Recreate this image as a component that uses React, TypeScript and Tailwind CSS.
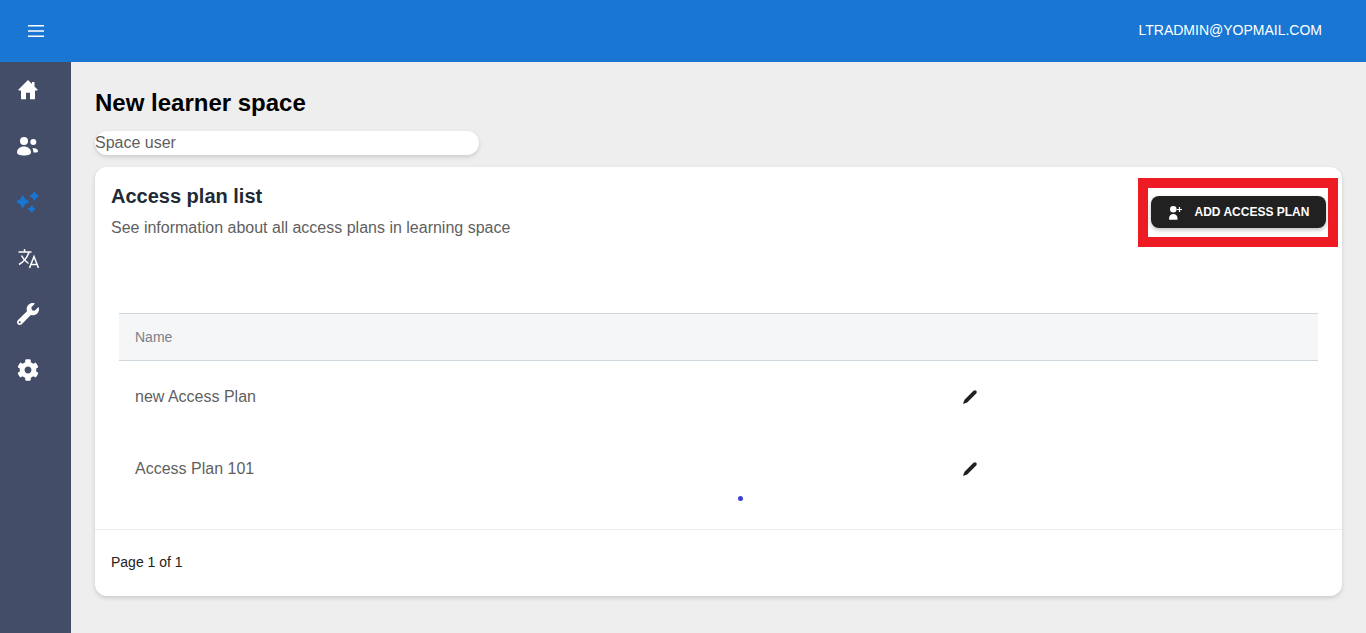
import React from 'react'
import { FaCog, FaWrench } from 'react-icons/fa'

function MenuIcon() {
  return (
    <svg viewBox="0 0 16 12" className="w-4 h-3" stroke="#ffffff" strokeWidth="1.4">
      <path d="M0 .8h16M0 6h16M0 11.200h16" />
    </svg>
  )
}

function HomeIcon() {
  return (
    <svg viewBox="0 0 24 24" className="w-6 h-6" fill="#ffffff">
      <path d="M12 2L2.500 11.500q-.5.9.5.9H5v8q0 .9.9.9H10v-6.500h4v6.500h4.100q.9 0 .9-.9v-8h2q1 0 .5-.9l-3-3V4h-2.500v2z" />
    </svg>
  )
}

function UsersIcon() {
  return (
    <svg viewBox="0 0 24 24" className="w-6 h-6" fill="#ffffff">
      <circle cx="8" cy="7" r="4" />
      <circle cx="17.300" cy="8" r="3" />
      <path d="M1 18.500C1 15 4 12.500 8 12.500s7 2.500 7 6c0 2-3 3-7 3s-7-1-7-3z" />
      <path d="M16.500 14c3 0 5.500 1 5.500 3 0 1-1 1.500-3 1.500h-1.500c-.2-1.800-.5-3-1-4.500z" />
    </svg>
  )
}

function Sparkles() {
  return (
    <svg viewBox="0 0 24 24" className="w-6 h-6" fill="#1976d2" stroke="#1976d2" strokeWidth="1" strokeLinejoin="round">
      <path d="M6.700 5.700Q8.200 10.200 12.700 11.700 8.200 13.200 6.700 17.700 5.200 13.200.7 11.700 5.200 10.200 6.700 5.700z" />
      <path d="M18.300 1.800Q19.300 5 22.500 6 19.300 7 18.300 10.200 17.300 7 14.100 6 17.300 5 18.300 1.800z" />
      <path d="M15.700 15.600Q16.600 18.100 19.100 19 16.600 19.900 15.700 22.400 14.800 19.900 12.300 19 14.800 18.100 15.700 15.600z" />
    </svg>
  )
}

function TranslateIcon() {
  return (
    <svg viewBox="0 0 24 24" className="w-6 h-6" fill="none" stroke="#ffffff" strokeWidth="1.500">
      <path d="M2.500 6h13M8.500 3v3M13 6c-1.500 5-5 9.500-10 12.500M5.500 9.500c1.500 3.300 4 6 7 8" />
      <path d="M13.500 22l4.500-11.500L22.500 22M15 18.500h6" />
    </svg>
  )
}

function Pencil() {
  return (
    <svg viewBox="0 0 24 24" className="w-6 h-6" fill="#212121">
      <path d="M5 19l1.500-4.200 9-9q1.500-1.200 2.800 0 1.100 1.200-.1 2.600l-9 9.100z" />
    </svg>
  )
}

function UserPlus() {
  return (
    <svg viewBox="0 0 16 16" className="w-4 h-4" fill="#ffffff">
      <circle cx="6.300" cy="5.300" r="3.300" />
      <path d="M2 15c0-3.200 1.800-5 4.300-5s4.300 1.800 4.300 5c0 .6-.5.8-1 .8H3c-.5 0-1-.2-1-.8z" />
      <path d="M12.500 3v5M10 5.500h5" stroke="#ffffff" strokeWidth="1.200" />
    </svg>
  )
}

function App() {
  const rows = ['new Access Plan', 'Access Plan 101']

  return (
    <div className="h-[633px] overflow-hidden flex flex-col bg-[#eeeeee] font-['Liberation_Sans',Arial,sans-serif]">
      <header className="h-[62px] shrink-0 bg-[#1976d2] flex items-center justify-between pr-[44px]">
        <div className="w-[72px] flex justify-center">
          <MenuIcon />
        </div>
        <span className="text-white text-sm pb-[2px]">LTRADMIN@YOPMAIL.COM</span>
      </header>

      <div className="flex flex-1">
        <aside className="w-[71px] shrink-0 bg-[#434d68] flex flex-col items-center pr-[15px]">
          <div className="h-14 w-6 flex items-center justify-center"><HomeIcon /></div>
          <div className="h-14 w-6 flex items-center justify-center"><UsersIcon /></div>
          <div className="h-14 w-6 flex items-center justify-center"><Sparkles /></div>
          <div className="h-14 w-6 flex items-center justify-center"><TranslateIcon /></div>
          <div className="h-14 w-6 flex items-center justify-center"><FaWrench className="text-white text-[22px]" /></div>
          <div className="h-14 w-6 flex items-center justify-center"><FaCog className="text-white text-[22px]" /></div>
        </aside>

        <main className="flex-1 pl-6 pr-6 pt-[27px]">
          <h1 className="text-2xl leading-7 font-bold text-black">New learner space</h1>

          <div className="mt-[14px] w-[384px] h-6 bg-white rounded-xl shadow-[0_2px_4px_rgba(0,0,0,0.15)] text-base leading-6 text-[#5f5f5f]">
            Space user
          </div>

          <section className="mt-3 h-[429px] bg-white rounded-xl shadow-[0_2px_4px_rgba(0,0,0,0.15)] flex flex-col">
            <div className="h-[146px] shrink-0 flex justify-between pt-[11px] pr-1 pl-4">
              <div>
                <h2 className="text-xl leading-6 font-bold text-[#1e2a35] mt-[6px]">Access plan list</h2>
                <p className="mt-2 text-base leading-6 text-[#5f5f5f]">
                  See information about all access plans in learning space
                </p>
              </div>
              <div className="w-[200px] h-[69px] border-10 border-[#ed1c24] flex justify-center pt-2">
                <button className="w-[175px] h-8 bg-[#212121] rounded-lg shadow-[0_2px_4px_rgba(0,0,0,0.25)] flex items-center pl-4 text-white">
                  <UserPlus />
                  <span className="ml-3 text-xs font-bold">ADD ACCESS PLAN</span>
                </button>
              </div>
            </div>

            <div className="mx-6 h-[216px] relative">
              <div className="h-12 bg-[#f4f6f8] border-y border-[#cfd8dc] flex items-center pl-4 text-sm text-[#7a8087]">
                Name
              </div>
              {rows.map((name) => (
                <div key={name} className="h-[72px] flex items-center pl-4 text-base text-[#5f5f5f]">
                  <span className="w-[823px]">{name}</span>
                  <Pencil />
                </div>
              ))}
              <span className="absolute left-[619px] top-[183px] w-[5px] h-[5px] rounded-full bg-[#3f3fd0]" />
            </div>

            <div className="mt-auto h-[67px] border-t border-[#eeeeee] flex items-center pl-4 pb-[2px] text-sm text-[#222222]">
              Page 1 of 1
            </div>
          </section>
        </main>
      </div>
    </div>
  )
}

export default App
